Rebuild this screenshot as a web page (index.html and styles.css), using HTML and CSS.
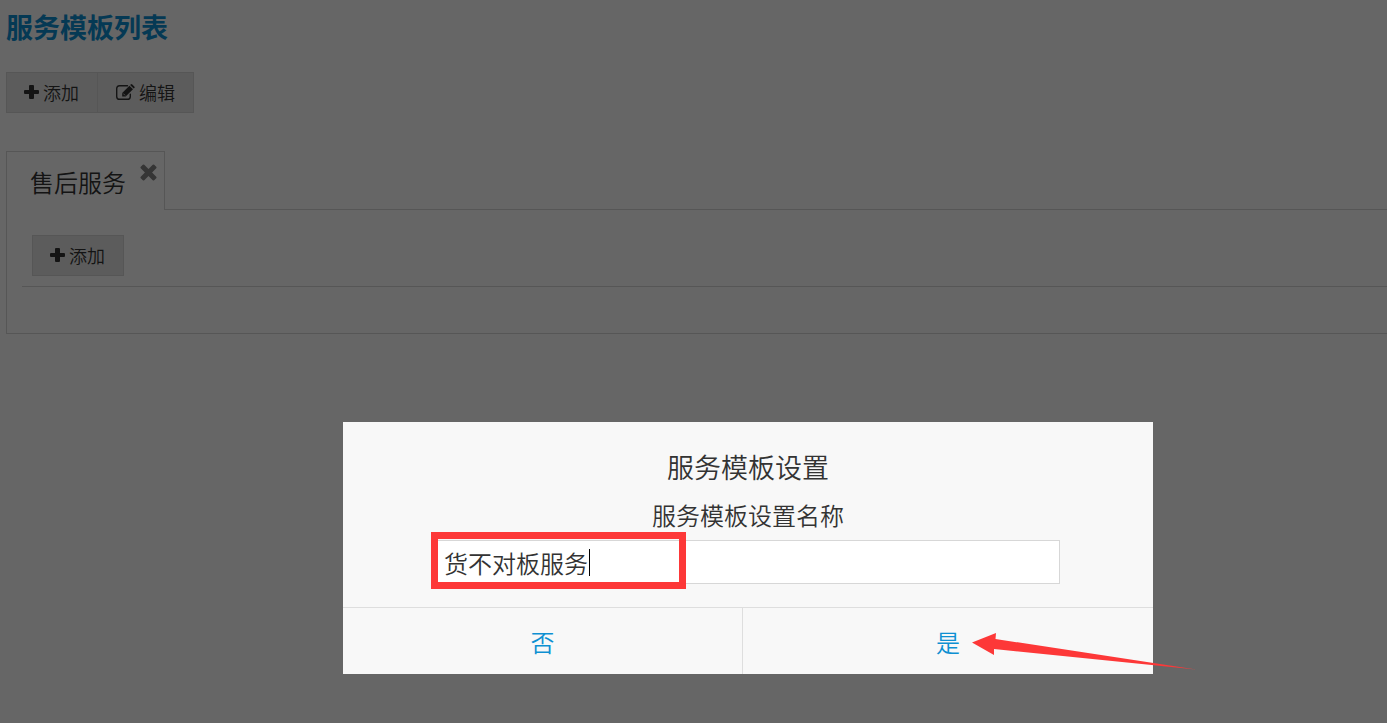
FILE: index.html
```html
<!DOCTYPE html>
<html lang="zh-CN">
    <head>
        <meta charset="UTF-8">
        <title>服务模板列表</title>
        <link rel="stylesheet" href="styles.css">
    </head>
    <body>
        <svg class="sprite" aria-hidden="true">
            <symbol id="icon-plus" viewBox="0 0 15 14">
                <path d="M6 0h3q1 0 1 1v4h4q1 0 1 1v2q0 1-1 1h-4v4q0 1-1 1h-3q-1 0-1-1v-4h-4q-1 0-1-1v-2q0-1 1-1h4v-4q0-1 1-1z"/>
            </symbol>
            <symbol id="icon-edit" viewBox="0 0 19 16">
                <path d="M11.500 1.700H3.600Q.7 1.700.7 4.600v7.800q0 2.900 2.900 2.900h7.800q2.900 0 2.900-2.900V10.200" fill="none" stroke="currentColor" stroke-width="1.400" stroke-linecap="round"/>
                <path d="M13.400 1.700l3.600 3.600-7.300 7.200H6.200V8.900z"/>
                <path d="M14.100 1l.6-.6q.8-.8 1.600 0l2 2q.8.800 0 1.600l-.6.600z"/>
                <path d="M7.300 9.600l1.800 1.800" fill="none" stroke="#e6e6e6" stroke-width=".8"/>
            </symbol>
            <symbol id="icon-close" viewBox="0 0 18 18">
                <path d="M4.500 .8L9 5.200 13.500 .8q.8-.7 1.500 0l2.200 2.200q.8.800 0 1.600L12.800 9l4.400 4.400q.8.800 0 1.600L15 17.200q-.8.800-1.500 0L9 12.800l-4.500 4.400q-.8.800-1.500 0L.8 15q-.8-.8 0-1.600L5.200 9 .8 4.600Q0 3.800.8 3L3 .8q.8-.7 1.500 0z"/>
            </symbol>
        </svg>

        <div class="page">
            <h1 class="page-title">服务模板列表</h1>
            <div class="btn-group">
                <button type="button" class="btn"><svg class="icon-plus"><use href="#icon-plus"/></svg>添加</button>
                <button type="button" class="btn"><svg class="icon-edit"><use href="#icon-edit"/></svg>编辑</button>
            </div>

            <div class="tabs">
                <div class="tab-nav">
                    <div class="tab">
                        <a href="#service">售后服务</a>
                        <button type="button" class="tab-close" aria-label="关闭"><svg class="icon-close"><use href="#icon-close"/></svg></button>
                    </div>
                </div>
                <div class="tab-panel" id="service">
                    <div class="panel-tools">
                        <button type="button" class="btn"><svg class="icon-plus"><use href="#icon-plus"/></svg>添加</button>
                    </div>
                </div>
            </div>
        </div>

        <div class="dimmer">
            <div class="modal" role="dialog" aria-labelledby="modal-title">
                <div class="modal-body">
                    <h2 class="modal-title" id="modal-title">服务模板设置</h2>
                    <label class="modal-label" for="name">服务模板设置名称</label>
                    <div class="field">
                        <input type="text" class="field-input" id="name" value="货不对板服务">
                        <span class="caret"></span>
                        <span class="mark"></span>
                    </div>
                </div>
                <div class="modal-footer">
                    <button type="button" class="modal-btn">否</button>
                    <button type="button" class="modal-btn">是</button>
                    <svg class="arrow" viewBox="0 0 224 37" aria-hidden="true">
                        <path d="M0 9.500L24 0 23.500 6 224 36.500 22 16V22z"/>
                    </svg>
                </div>
            </div>
        </div>
    </body>
</html>
```
FILE: styles.css
```css
* {
    box-sizing: border-box;
}
body {
    margin: 0;
    background: #fff;
    color: #333;
    font-family: "Noto Sans CJK SC", sans-serif;
    font-size: 24px;
    font-weight: 350;
    overflow: hidden;
}
button,
input {
    font-family: inherit;
    font-weight: inherit;
    color: inherit;
}
svg {
    fill: currentColor;
}
.sprite {
    position: absolute;
    width: 0;
    height: 0;
}
.page {
    padding: 7px 0 0 6px;
}
.page-title {
    margin: 0 0 25px;
    color: #0e90d2;
    font-size: 27px;
    line-height: 40px;
}

/* buttons */
.btn-group {
    display: flex;
}
.btn {
    display: flex;
    align-items: center;
    gap: 4px;
    height: 41px;
    padding: 0 18px 1px 17px;
    border: 1px solid #d7d7d7;
    background: #e6e6e6;
    font-size: 18px;
    line-height: 24px;
}
.btn + .btn {
    padding-left: 18px;
    border-left: 0;
}
.icon-plus {
    width: 15px;
    height: 14px;
}
.icon-edit {
    width: 19px;
    height: 16px;
}
.icon-close {
    display: block;
    width: 17px;
    height: 17px;
}

/* tabs */
.tabs {
    margin-top: 38px;
}
.tab-nav {
    display: flex;
}
.tab-nav::after {
    content: "";
    flex: 1;
    border-bottom: 1px solid #d7d7d7;
}
.tab {
    display: flex;
    align-items: flex-start;
    gap: 14px;
    height: 59px;
    padding: 12px 7px 0 23px;
    border: 1px solid #d7d7d7;
    border-bottom: 0;
}
.tab a {
    color: #333;
    line-height: 36px;
    text-decoration: none;
}
.tab-close {
    padding: 0;
    border: 0;
    background: none;
    opacity: .6;
}
.tab-panel {
    padding: 25px 0 46px 15px;
    border: 1px solid #d7d7d7;
    border-width: 0 0 1px 1px;
}
.panel-tools {
    padding: 0 0 10px 10px;
    border-bottom: 1px solid #d7d7d7;
}

/* modal */
.dimmer {
    position: fixed;
    inset: 0;
    display: flex;
    justify-content: center;
    align-items: flex-end;
    padding: 0 0 49px 109px;
    background: rgba(0, 0, 0, .6);
}
.modal {
    width: 810px;
    background: #f8f8f8;
}
.modal-body {
    display: flex;
    flex-direction: column;
    align-items: center;
    padding: 25px 93px 23px;
    text-align: center;
}
.modal-title {
    margin: 0 0 10px;
    font-size: 27px;
    font-weight: inherit;
    line-height: 40px;
}
.modal-label {
    margin-bottom: 7px;
    line-height: 36px;
}
.field {
    position: relative;
    width: 100%;
}
.field-input {
    display: block;
    width: 100%;
    height: 44px;
    padding: 0 7px;
    border: 1px solid #d7d7d7;
    background: #fff;
    font-size: 24px;
}
.caret {
    position: absolute;
    top: 9px;
    left: 153px;
    width: 1px;
    height: 27px;
    background: #000;
}
.mark {
    position: absolute;
    top: -8px;
    left: -5px;
    width: 255px;
    height: 57px;
    border: 7px solid #fd3838;
}
.modal-footer {
    position: relative;
    display: grid;
    grid-template-columns: 400fr 410fr;
    border-top: 1px solid #dedede;
}
.modal-btn {
    height: 66px;
    padding: 0;
    border: 0;
    background: none;
    color: #0e90d2;
    font-size: 24px;
}
.modal-btn:first-child {
    border-right: 1px solid #dedede;
}
.arrow {
    position: absolute;
    top: 25px;
    left: 629px;
    width: 224px;
    height: 37px;
    fill: #fd3838;
}
```
